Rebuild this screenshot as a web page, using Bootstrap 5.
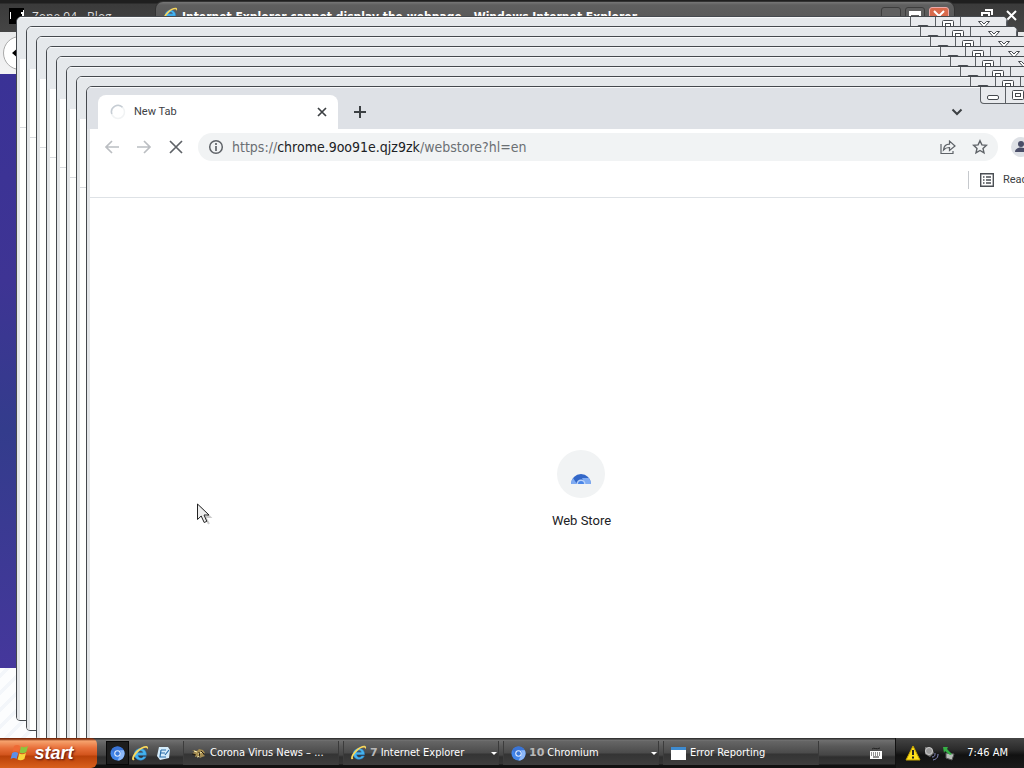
<!DOCTYPE html>
<html lang="en">
<head>
<meta charset="utf-8">
<meta name="viewport" content="width=device-width, initial-scale=1">
<title>Desktop</title>
<link href="https://cdn.jsdelivr.net/npm/bootstrap@5.3.0/dist/css/bootstrap.min.css" rel="stylesheet">
<style>
body{font-family:Roboto,"Open Sans",sans-serif;font-size:11px;line-height:16px;color:#3c4043}
button{border:0;background:none;padding:0;color:inherit;font:inherit;display:flex;align-items:center;justify-content:center}
svg{display:block;flex:none}
.desk{background:repeating-linear-gradient(135deg,#fcfdfe 0 8px,#f3f6fa 8px 12px)}
/* full-screen browser at the back */
.back-title{height:32px;background:linear-gradient(#1f1f1f 0 3px,#3b3b3b 4px,#454545);padding:8px 3px 0 9px;color:#ddd;font-family:"Open Sans",sans-serif;font-size:12px;line-height:18px}
.back-tools{height:42px;background:linear-gradient(#e8e9ea,#f3f3f4);padding:4px 3px}
.back-btn{width:34px;height:34px;border:1px solid #aaa;border-radius:50%;background:#fff;color:#000;justify-content:flex-start;padding-left:7px}
.back-page{height:calc(100% - 144px);background:linear-gradient(#3a3296,#3e3494 35%,#333c8c 60%,#45379c)}
.ie-win{left:156px;top:2px;width:798px;height:40px;background:linear-gradient(#777,#5f5f5f 3px,#505050);border-radius:7px 7px 0 0;padding:5px 5px 0 7px;color:#fff;font:bold 12px/20px "DejaVu Sans Condensed","DejaVu Sans",sans-serif;font-stretch:condensed;box-shadow:0 0 0 1px #333}
.ie-ctl{width:20px;height:18px;border:1px solid #3d3d3d;border-radius:3px;background:#606060}
.ie-ctl.shut{background:#d86a4c;border-color:#eaa}
/* stacked windows */
.win{left:calc(16px + var(--n)*10px);top:calc(16px + var(--n)*10px);width:calc(100% - 32px);height:calc(100% - 33px);border:1px solid #45494e;border-radius:6px 6px 4px 4px;background:#fff;overflow:hidden}
.strip{height:42px;background:#e5e8eb;border-top:1px solid #f8f9fa}
.edge{border-left:3px solid #e3e5e8;flex:1}
.edge .bar-area{height:69px;border-bottom:1px solid #d9dbdf}
.front .strip{background:#dee1e6;padding:7px 90px 0 8px}
.controls{top:-1px;right:0;height:18px;border:1px solid #5b5f64;border-top:0;border-radius:0 0 4px 4px;background:#e8eaed}
.controls button{width:25px;border-right:1px solid #5b5f64;color:#45494e}
.controls button:last-child{width:45px;border:0}
.tab-top{width:240px;height:34px;background:#fff;border-radius:8px 8px 0 0;padding:0 10px 0 12px;margin-left:3px}
.tools{height:35px;padding:0 14px}
.addr{height:28px;border-radius:14px;background:#f1f3f4;margin-left:14px;margin-right:13px;padding:0 10px;font:14px/20px "DejaVu Sans Condensed","DejaVu Sans",sans-serif;font-stretch:condensed;color:#6b6f73}
.addr-text b{font-weight:400;color:#202124}
.marks{height:34px;padding-right:14px;padding-bottom:2px}
.marks-line{border-left:1px solid #c6c9cd;height:18px;margin-right:10px}
.list-label{width:60px;text-align:left;white-space:nowrap}
.shortcut{color:#202124;font:13px/16px Roboto,sans-serif;text-decoration:none;padding-bottom:10px;margin-right:4px}
.shortcut .disc{width:48px;height:48px;border-radius:50%;background:#f1f3f4;margin-bottom:15px}
.avatar{width:20px;height:20px;border-radius:50%;background:#dee1e6;overflow:hidden}
/* taskbar */
.taskbar{height:30px;background:linear-gradient(#333 0 1px,#707070 2px,#5a5a5a 8px,#454545 17px,#2e2e2e 19px,#363636 26px,#111 27px);font-family:"DejaVu Sans Condensed","DejaVu Sans",sans-serif;font-stretch:condensed;font-size:11px;color:#fff}
.start{width:97px;margin-right:9px;background:linear-gradient(#7b2a0b 0 1px,#f6a36e 3px,#e8703a 10px,#d2541c 17px,#b94109 18px,#d9601d);border-radius:0 6px 6px 0;font:italic bold 18px/24px "Liberation Sans",sans-serif;text-shadow:1px 1px 2px #511;color:#fff;gap:3px;padding-right:14px}
.quick{width:23px;height:24px}
.quick.on{background:#1d1d1d;border:1px solid #080808}
.task{width:156px;height:24px;margin-right:4px;padding:0 1px 0 7px;border-left:1px solid #3c3c3c;border-right:1px solid #3a3a3a;background:linear-gradient(#666,#4b4b4b 12px,#343434 13px,#3e3e3e);justify-content:flex-start;gap:4px;color:#fff;white-space:nowrap}
.task.grouped{gap:3px}
.task b{color:#b8b8b8;font:bold 11px/16px "DejaVu Sans",sans-serif}
.caret{border:3px solid transparent;border-top-color:#fff;border-bottom:0}
.tray{width:129px;background:linear-gradient(#444,#2a2a2a 12px,#111 17px,#1b1b1b);border-left:1px solid #111;padding-left:9px;gap:2px}
.pointer{left:197px;top:503px}
</style>
</head>
<body>
<svg width="0" height="0" class="position-absolute" aria-hidden="true">
<defs>
<symbol id="ie" viewBox="0 0 16 16"><path d="M13.500 9.700H5.600c.2 2.800 4 3.400 4.900 1.300h2.800C11.300 16 2.100 15.300 2.200 8.500 2.300 1.800 14.100 1.200 13.500 9.700zM5.700 7.300h4.600C10 4.700 6 4.700 5.700 7.300z" fill="#45b4ee" stroke="#2a7fcb" stroke-width=".5"/><path d="M2.500 13.800C-1.500 16-.5 10 4.500 5.200 9.800.2 17-1 14.600 4.200 14.300 1.500 10.500 2 6.300 6 2.800 9.300.8 13 2.500 13.800z" fill="#f8d75c"/></symbol>
<symbol id="cr" viewBox="0 0 16 16"><circle cx="8" cy="8" r="7.500" fill="#4286ea"/><path d="M8 .5a7.500 7.500 0 0 1 6.700 4.100H8A3.500 3.500 0 0 0 4.800 9.500L1.700 4A7.500 7.500 0 0 1 8 .5z" fill="#3a74d6"/><path d="M14.700 4.600A7.500 7.500 0 0 1 8 15.500l3-6a3.500 3.500 0 0 0-.5-4.900z" fill="#8db9fa"/><circle cx="8" cy="8" r="3.500" fill="#dbe8fd"/><circle cx="8" cy="8" r="2.300" fill="#3979dc"/></symbol>
<symbol id="mn" viewBox="0 0 14 14"><rect x="1.500" y="7.500" width="11" height="4" rx="1.500" fill="#fff" stroke="#45494e"/></symbol>
<symbol id="mx" viewBox="0 0 14 14"><rect x="1.500" y="2.500" width="11" height="9" rx="1" fill="#fff" stroke="#45494e"/><rect x="4.500" y="5.500" width="5" height="3" fill="#fff" stroke="#45494e"/></symbol>
<symbol id="cx" viewBox="0 0 14 14"><path d="M1.500 3.500h3L7 6l2.500-2.500h3L8.800 7.500l3.700 4h-3L7 9l-2.500 2.500h-3l3.700-4z" fill="#fff" stroke="#45494e"/></symbol>
</defs>
</svg>
<div class="vh-100 d-flex flex-column overflow-hidden">
<main class="desk flex-grow-1 position-relative overflow-hidden">
  <div class="back-title d-flex align-items-start gap-2">
    <svg width="15" height="16"><path d="M0 0h15v16H0z"/><path d="M1 4h1v7H1zM12 4h2V2h1v7h-2V6h-1z" fill="#fff"/></svg>
    <span>Zone 94 - Blog</span>
    <svg class="ms-auto" width="44" height="16"><path d="M5 5h7v5H5zM8 2h7v5" fill="none" stroke="#fff" stroke-width="2"/><path d="M30 3l9 9M39 3l-9 9" stroke="#fff" stroke-width="2"/></svg>
  </div>
  <div class="back-tools"><button class="back-btn" aria-label="Back"><svg width="16" height="16"><path d="M1 8l7-6v4h7v4H8v4z"/></svg></button></div>
  <div class="back-page"></div>

  <section class="ie-win position-absolute d-flex align-items-start gap-1">
    <svg width="15" height="15"><use href="#ie"/></svg>
    <span class="flex-grow-1">Internet Explorer cannot display the webpage - Windows Internet Explorer</span>
    <button class="ie-ctl" aria-label="Minimize"></button>
    <button class="ie-ctl" aria-label="Maximize"><svg width="12" height="12"><path d="M1 2h10v9H1z" fill="none" stroke="#fff" stroke-width="2"/><path d="M0 2h12v3H0z" fill="#fff"/></svg></button>
    <button class="ie-ctl shut" aria-label="Close"><svg width="12" height="12"><path d="M1 1l10 10M11 1L1 11" stroke="#fff" stroke-width="2"/></svg></button>
  </section>

  <div id="stack"></div>

  <section class="win front position-absolute d-flex flex-column" style="--n:7">
    <div class="strip d-flex align-items-center">
      <div class="tab-top d-flex align-items-center gap-2">
        <svg width="16" height="16"><circle cx="8" cy="8" r="6.500" fill="none" stroke="#f1f3f4" stroke-width="1.500"/><path d="M1.800 10A6.500 6.500 0 0 1 12.500 3.300" fill="none" stroke="#c6cdd4" stroke-width="1.500"/></svg>
        <span class="flex-grow-1">New Tab</span>
        <button aria-label="Close tab"><svg width="12" height="12"><path d="M2 2l8 8M10 2l-8 8" stroke="#3c4043" stroke-width="1.700"/></svg></button>
      </div>
      <button class="ms-3" aria-label="New tab"><svg width="12" height="12"><path d="M6 0v12M0 6h12" stroke="#3c4043" stroke-width="2"/></svg></button>
      <button class="ms-auto me-4" aria-label="Search tabs"><svg width="12" height="12"><path d="M1.500 3.500L6 8l4.500-4.500" fill="none" stroke="#3c4043" stroke-width="2"/></svg></button>
    </div>
    <div class="edge d-flex flex-column">
      <div class="tools d-flex align-items-center">
        <button class="me-3" aria-label="Back"><svg width="16" height="16"><path d="M15 8H2M8 2L2 8l6 6" fill="none" stroke="#bbbec2" stroke-width="1.700"/></svg></button>
        <button class="me-3" aria-label="Forward"><svg width="16" height="16"><path d="M1 8h13M8 2l6 6-6 6" fill="none" stroke="#bbbec2" stroke-width="1.700"/></svg></button>
        <button aria-label="Stop"><svg width="16" height="16"><path d="M2 2l12 12M14 2L2 14" stroke="#5f6368" stroke-width="1.700"/></svg></button>
        <div class="addr flex-grow-1 d-flex align-items-center gap-2">
          <svg width="16" height="16"><circle cx="8" cy="8" r="6.300" fill="none" stroke="#5f6368" stroke-width="1.500"/><path d="M8 7v5M8 4v2" stroke="#5f6368" stroke-width="1.700"/></svg>
          <span class="addr-text flex-grow-1">https://<b>chrome.9oo91e.qjz9zk</b>/webstore?hl=en</span>
          <button class="me-2" aria-label="Share"><svg width="16" height="16"><path d="M1 5v9.500h12V12M3.500 11C4 6.500 6.500 5.200 9.500 5.200V2l5.500 5-5.500 4.500V8.500C7 8.400 5 9.300 3.500 11z" fill="none" stroke="#5f6368" stroke-width="1.200"/></svg></button>
          <button aria-label="Bookmark"><svg width="16" height="16"><path d="M8 1.700l1.900 4.200 4.500.4-3.400 3.100 1 4.500L8 11.500l-4 2.400 1-4.500-3.400-3.100 4.500-.4z" fill="none" stroke="#5f6368" stroke-width="1.400"/></svg></button>
        </div>
        <button class="avatar me-3" aria-label="Profile"><svg width="20" height="20"><circle cx="10" cy="7" r="3" fill="#4a4e68"/><path d="M4 15c0-6 12-6 12 0z" fill="#4a4e68"/></svg></button>
        <button aria-label="Menu"><svg width="16" height="16" fill="#5f6368"><circle cx="8" cy="3" r="1.500"/><circle cx="8" cy="8" r="1.500"/><circle cx="8" cy="13" r="1.500"/></svg></button>
      </div>
      <div class="marks d-flex align-items-center justify-content-end border-bottom">
        <span class="marks-line"></span>
        <button class="gap-2"><svg width="16" height="16"><path d="M1.700 1.700h12.600v12.600H1.700z" fill="none" stroke="#4b4f54" stroke-width="1.400"/><path d="M4 5h1.500M4 8h1.500M4 11h1.500M7 5h5M7 8h5M7 11h5" stroke="#4b4f54" stroke-width="1.400"/></svg><span class="list-label">Reading list</span></button>
      </div>
      <div class="flex-grow-1 d-flex align-items-center justify-content-center">
        <a href="#" class="shortcut d-flex flex-column align-items-center">
          <span class="disc d-flex align-items-center justify-content-center"><svg width="20" height="12" class="mt-2"><path d="M0 12a10 10 0 0 1 20 0z" fill="#3367c8"/><path d="M0 12a10 10 0 0 1 2-6l4 6zM20 12a10 10 0 0 0-2-6h-7l3 6z" fill="#7fabf2"/><path d="M5.500 12a4.500 4.500 0 0 1 9 0z" fill="#b9d2fa"/><path d="M7 12a3 3 0 0 1 6 0z" fill="#4a86e8"/></svg></span>
          Web Store
        </a>
      </div>
    </div>
  </section>

  <svg class="pointer position-absolute" width="16" height="22"><path d="M3 4l10 10h-5l4 7" fill="none" stroke="#ccc" stroke-width="2"/><path d="M.5 1v15.500L4.200 13l3 6.500 2.600-1.200L7 12h5z" fill="#eee" stroke="#222"/></svg>
</main>

<footer class="taskbar d-flex align-items-center">
  <button class="start align-self-stretch">
    <svg width="22" height="20" viewBox="0 0 22 20"><path d="M5 3c2-1.500 4-1.500 6 0L9.500 9c-2-1.300-4-1.300-6 0z" fill="#ee6a35"/><path d="M12 3.500c2 1.300 4.500 1 7-.5l-1.700 6c-2.500 1.400-4.800 1.600-6.800.5z" fill="#8cc63e"/><path d="M3.200 10c2-1.300 4-1.300 6 0l-1.600 6c-2-1.300-4-1.300-6 0z" fill="#5b8fe8"/><path d="M10.200 10.500c2 1.300 4.500 1 6.800-.5l-1.600 6c-2.500 1.500-4.800 1.700-6.800.5z" fill="#f9d43c"/></svg>
    start
  </button>
  <button class="quick on" aria-label="Chromium"><svg width="15" height="15"><use href="#cr"/></svg></button>
  <button class="quick" aria-label="Internet Explorer"><svg width="17" height="17"><use href="#ie"/></svg></button>
  <button class="quick me-2" aria-label="Outlook Express"><svg width="15" height="15"><path d="M3 1h9l2 3-1 8-9 2-3-4z" fill="#d5ecfb"/><path d="M5 4h5M5 4l-1 7h6M5 7h4M9 9l4-5" stroke="#286da8" stroke-width="1.200" fill="none"/></svg></button>
  <button class="task"><svg width="15" height="15"><path d="M1 4l5 1 2-2 4 1 2 3-2 1 2 2-3 1-2 1-2-2-3 1 0-3-3-1 3-1z" fill="#a58c50"/><path d="M3 5l3 1M7 8l4-2M6 11l4-1" stroke="#fff0b0"/><path d="M1 8l4 1M8 6l1 5M10 5l3 3" stroke="#221b10"/></svg>Corona Virus News – ...</button>
  <button class="task grouped"><svg width="16" height="16"><use href="#ie"/></svg><b>7</b><span class="me-auto">Internet Explorer</span><i class="caret"></i></button>
  <button class="task grouped"><svg width="15" height="15"><use href="#cr"/></svg><b>10</b><span class="me-auto">Chromium</span><i class="caret"></i></button>
  <button class="task"><svg width="15" height="13"><path d="M0 0h15v13H0z" fill="#fff"/><path d="M0 0h15v3H0z" fill="#3e8bd0"/></svg>Error Reporting</button>
  <button class="ms-auto me-2 pe-1" aria-label="Keyboard"><svg width="14" height="14"><path d="M3 3c2-2 4 1 8-1" stroke="#222" fill="none"/><path d="M1 5h12v8H1z" fill="#fff"/><path d="M2 7h10M2 9h10" stroke="#222" stroke-dasharray="1 1"/><path d="M4 11h6" stroke="#222"/></svg></button>
  <div class="tray align-self-stretch d-flex align-items-center">
    <svg width="16" height="16"><path d="M8 1l7 14H1z" fill="#ffe01b" stroke="#c5a300"/><path d="M8 5v5M8 11.500v2" stroke="#222" stroke-width="2"/></svg>
    <svg width="17" height="16"><path d="M2 2l7 1 2 5-4 4-5-3z" fill="#777"/><circle cx="6" cy="6" r="3.500" fill="#999" stroke="#ccc"/><path d="M9 12c3 0 3-2 3-4M10 15c4-1 5-3 5-6" fill="none" stroke="#8d91c8"/></svg>
    <svg width="14" height="16"><path d="M4 8l8 1-2 6-6-2z" fill="#b7bdb7" stroke="#555"/><path d="M1 2l5 0-1 2 5 5-2 1-5-4-1 2z" fill="#35b045"/></svg>
    <span class="ms-auto me-3">7:46 AM</span>
  </div>
</footer>
</div>

<template id="controls"><div class="controls position-absolute d-flex">
  <button aria-label="Minimize"><svg width="14" height="14"><use href="#mn"/></svg></button>
  <button aria-label="Maximize"><svg width="14" height="14"><use href="#mx"/></svg></button>
  <button aria-label="Close"><svg width="14" height="14"><use href="#cx"/></svg></button>
</div></template>
<script src="https://cdn.jsdelivr.net/npm/bootstrap@5.3.0/dist/js/bootstrap.bundle.min.js"></script>
<script>
// Seven windows cascade behind the active one.
const controls = document.getElementById('controls');
const stack = document.getElementById('stack');
for (let n = 0; n < 7; n++) {
  const win = document.createElement('section');
  win.className = 'win position-absolute d-flex flex-column';
  win.style.setProperty('--n', n);
  win.innerHTML = '<div class="strip"></div><div class="edge"><div class="bar-area"></div></div>';
  win.append(controls.content.cloneNode(true));
  stack.append(win);
}
document.querySelector('.front').append(controls.content.cloneNode(true));
</script>
</body>
</html>
